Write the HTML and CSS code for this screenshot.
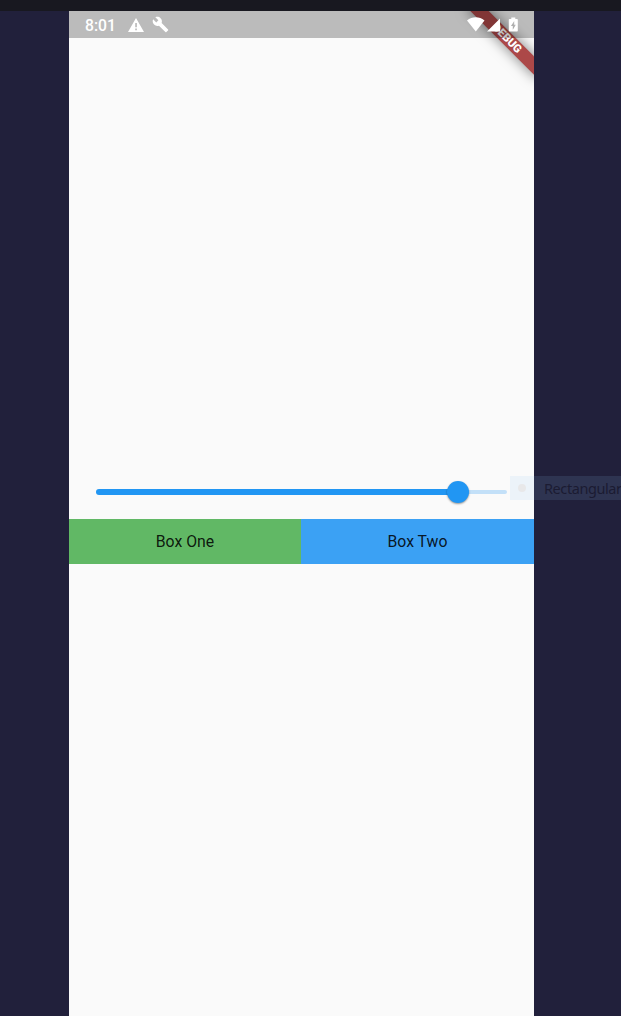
FILE: index.html
```html
<!DOCTYPE html>
<html lang="en">
<head>
<meta charset="utf-8">
<title>Slider demo</title>
<link rel="stylesheet" href="styles.css">
</head>
<body>
<div class="topbar"></div>
<div class="desk">
  <main class="phone">
    <div class="banner"><span>DEBUG</span></div>
    <header class="status">
      <span class="time">8:01</span>
      <svg class="warn" width="16" height="14" viewBox="0 0 16 14"><path fill="#fff" fill-rule="evenodd" d="M8 0 16 14H0ZM7.200 5v4.200h1.700V5Zm0 5.500v1.700h1.700v-1.700Z"/></svg>
      <svg class="wrench" width="17" height="17" viewBox="0 0 24 24"><path fill="#fff" d="M22.7 19l-9.1-9.1c.9-2.3.4-5-1.5-6.9-2-2-5-2.4-7.4-1.3L9 6 6 9 1.6 4.7C.4 7.1.9 10.1 2.9 12.1c1.9 1.9 4.6 2.4 6.900 1.500l9.100 9.100c.4.4 1 .4 1.400 0l2.300-2.300c.5-.4.5-1.100.1-1.400z"/></svg>
      <svg class="system" width="53" height="18" viewBox="0 0 53 18"><path fill="#fff" d="M0 4.500C5.200 .2 12.300 .2 17.500 4.500L8.800 15.500ZM33 2.500v13H20Z"/><path fill="#fff" fill-rule="evenodd" d="M44.300 1.500h4v1.500H50q.8 0 .8.8V14.700q0 .8-.8.8h-7.400q-.8 0-.8-.8V3.800q0-.8.8-.8h1.700ZM47.200 5 44 10h1.800V13.700L48.800 8.700H47.200Z"/></svg>
    </header>
    <div class="slider"><i class="filled"></i><i class="rest"></i><i class="thumb"></i></div>
    <section class="boxes">
      <div class="box one">Box One</div>
      <div class="box two">Box Two</div>
    </section>
  </main>
  <div class="snip"><i></i><span>Rectangular</span></div>
</div>
</body>
</html>
```
FILE: styles.css
```css
* { box-sizing: border-box; }
body { margin: 0; width: 621px; height: 1016px; overflow: hidden; background: #21203b; font-family: Roboto, sans-serif; }
.topbar { height: 11px; background: #181820; }
.desk { position: relative; height: 1005px; padding-left: 69px; overflow: hidden; }
.phone { position: relative; width: 465px; height: 1005px; overflow: hidden; background: #fafafa; }
.banner { position: absolute; left: 388px; top: 21px; width: 100px; height: 13px; background: #ac4848; transform: rotate(45deg); box-shadow: 0 0 13px rgba(0,0,0,.5); display: flex; align-items: center; justify-content: center; }
.banner span { color: #fff; font-size: 11.3px; font-weight: 900; line-height: 13px; }
.status { position: relative; height: 27px; display: flex; align-items: center; padding: 0 14px 0 16px; background: rgba(0,0,0,.25); color: #fff; }
.time { width: 43px; font-size: 15.7px; font-weight: 500; line-height: 27px; padding-top: 1px; }
.wrench { margin-left: 8px; }
.system { margin-left: auto; }
.slider { position: relative; height: 24px; margin: 442px 27px 0; display: flex; align-items: center; }
.filled { width: 362px; height: 6px; margin-top: -1px; border-radius: 3px 0 0 3px; background: #2196f3; }
.rest { width: 49px; height: 4px; margin-top: -1px; border-radius: 0 2px 2px 0; background: #c3e0f8; }
.thumb { position: absolute; left: 350.5px; top: .5px; width: 22.5px; height: 22.5px; border-radius: 50%; background: #2196f3; box-shadow: 0 1px 2px rgba(0,0,0,.4); }
.boxes { display: flex; height: 45px; margin-top: 15px; }
.box { display: flex; align-items: center; justify-content: center; font-size: 15.8px; color: rgba(0,0,0,.87); }
.one { width: 232px; background: #61b865; }
.two { flex: 1; background: #3ba1f4; }
.snip { position: absolute; left: 510px; top: 465px; width: 111px; height: 24px; display: flex; align-items: center; overflow: hidden; background: rgba(139,199,250,.12); font: 14.5px/24px "Noto Sans", sans-serif; color: #1b1b32; }
.snip i { flex: none; width: 8px; height: 8px; margin-left: 8px; border-radius: 50%; background: #e8e8e9; }
.snip span { margin-left: 18px; letter-spacing: -.42px; }
```
